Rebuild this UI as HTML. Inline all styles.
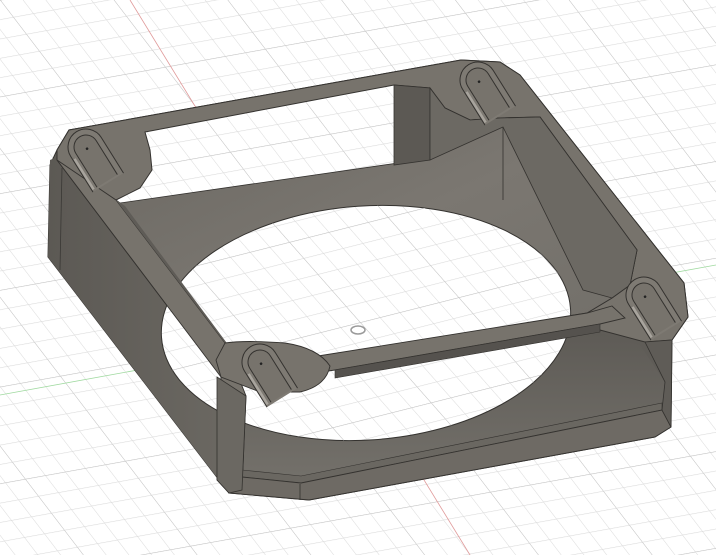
<!DOCTYPE html>
<html><head><style>html,body{margin:0;padding:0;background:#fff;width:716px;height:555px;overflow:hidden}</style></head>
<body>
<svg width="716" height="555" viewBox="0 0 716 555" xmlns="http://www.w3.org/2000/svg">
<defs>
<pattern id="g" width="10" height="10" patternUnits="userSpaceOnUse" patternTransform="matrix(2 -0.36 1.3 1.7 0 0)">
<rect width="10" height="10" fill="#fff"/>
<path d="M0 0H10M0 0V10" stroke="#dadada" stroke-width="0.55" fill="none"/>
</pattern>
<pattern id="G" width="50" height="50" patternUnits="userSpaceOnUse" patternTransform="matrix(2 -0.36 1.3 1.7 0 0)">
<path d="M0 0H50M0 0V50" stroke="#c2c2c2" stroke-width="0.45" fill="none"/>
</pattern>
<linearGradient id="fl" x1="0" y1="0" x2="1" y2="1"><stop offset="0" stop-color="#6a6761"/><stop offset="0.5" stop-color="#7b7771"/><stop offset="1" stop-color="#716e68"/></linearGradient>
<linearGradient id="lw" x1="0" y1="0" x2="1" y2="0"><stop offset="0" stop-color="#5c5954"/><stop offset="1" stop-color="#6b6862"/></linearGradient>
<linearGradient id="low" x1="0" y1="0" x2="0" y2="1"><stop offset="0" stop-color="#5e5b56"/><stop offset="1" stop-color="#74716b"/></linearGradient>
<g id="boss">
<path d="M-18,42 V0 A18,18 0 0 1 18,0 V42" fill="#7e7a73" stroke="#34322f" stroke-width="1"/>
<path d="M-12,40 V0 A12,12 0 0 1 12,0 V40" fill="#77736c" stroke="#34322f" stroke-width="1"/>
<path d="M-16,40 V4" stroke="#a8a49d" stroke-width="2.5" fill="none"/>
<circle cx="0" cy="2" r="1.3" fill="#222"/>
</g>
</defs>
<rect width="716" height="555" fill="url(#g)"/>
<rect width="716" height="555" fill="url(#G)"/>
<line x1="130" y1="0" x2="470" y2="555" stroke="#e09a9a" stroke-width="0.8"/>
<line x1="0" y1="395" x2="716" y2="265" stroke="#9fd99f" stroke-width="0.8"/>

<!-- silhouette -->
<polygon points="57,150 69,130 461,60 500,62 520,75 684,283 688,317 672,340 671,427 655,437 309,500 229,493 48,257 50,165" fill="#5f5c57" stroke="#34322f" stroke-width="1"/>
<polygon points="50,160 57,157 221,377 217,480 229,493 48,257" fill="url(#lw)"/>
<line x1="62" y1="168" x2="60" y2="270" stroke="#3a3835" stroke-width="0.8"/>
<!-- top face -->
<polygon points="57,150 69,130 461,60 500,62 520,75 684,283 688,317 672,340 645,342 600,330 335,377 310,392 260,392 221,377 57,160" fill="#77736c" stroke="#34322f" stroke-width="1"/>
<!-- opening (see-through) -->
<polygon points="116,200 140,188 152,170 150,150 145,132 394,85 430,88 445,108 470,120 500,118 540,117 637,250 630,285 612,298 587,313 326,353 318,358 300,348 260,342 225,343" fill="url(#g)"/>
<polygon points="116,200 140,188 152,170 150,150 145,132 394,85 430,88 445,108 470,120 500,118 540,117 637,250 630,285 612,298 587,313 326,353 318,358 300,348 260,342 225,343" fill="url(#G)" stroke="#34322f" stroke-width="1"/>
<!-- floor -->
<polygon points="116,200 120,203 398,163 430,150 445,108 470,120 500,118 540,117 637,250 630,285 612,298 587,313 326,353 318,358 300,348 260,342 225,343" fill="url(#fl)" stroke="#34322f" stroke-width="0.8"/>
<!-- back wall vertical -->
<polygon points="394,85 430,88 430,160 394,165" fill="#5c5954" stroke="#34322f" stroke-width="0.8"/>
<!-- right inner wall -->
<polygon points="430,88 445,108 470,120 500,118 540,117 637,250 630,285 612,298 583,290 503,127 430,160" fill="#6c6963" stroke="#34322f" stroke-width="0.8"/>
<line x1="503" y1="127" x2="503" y2="200" stroke="#34322f" stroke-width="0.8"/>
<!-- lower interior (under beam) -->
<polygon points="238,392 246,398 600,333 640,345 665,382 662,410 301,483 242,477" fill="url(#low)"/>
<!-- hole -->
<ellipse cx="366" cy="323" rx="205" ry="117" transform="rotate(-4 366 323)" fill="url(#g)" stroke="#34322f" stroke-width="1"/>
<ellipse cx="366" cy="323" rx="205" ry="117" transform="rotate(-4 366 323)" fill="url(#G)"/>
<!-- left strip redraw (covers hole overflow) -->
<polygon points="57,160 116,200 225,343 246,396 242,490 229,493 217,480 221,377" fill="#77736c" stroke="#34322f" stroke-width="0.9"/>
<polygon points="116,200 125,206 232,350 225,343" fill="#5f5c57"/>
<!-- lip at bottom of lower interior -->
<polygon points="242,470 301,476 662,403 662,410 301,483 242,477" fill="#6a6761" stroke="#34322f" stroke-width="0.6"/>
<!-- beam -->
<polygon points="318,356 587,313 612,306 625,318 600,324 335,370 322,372" fill="#77736c" stroke="#34322f" stroke-width="0.9"/>
<polygon points="335,370 600,324 600,332 335,378" fill="#55524e" stroke="#34322f" stroke-width="0.6"/>
<!-- front lip bottom -->
<polygon points="242,477 301,483 662,410 671,427 655,437 309,500 229,493" fill="#6e6a64" stroke="#34322f" stroke-width="0.9"/>
<line x1="300" y1="484" x2="300" y2="500" stroke="#34322f" stroke-width="0.8"/>
<!-- left post front face -->
<polygon points="217,377 246,396 242,490 229,493 217,480" fill="#6b6862" stroke="#34322f" stroke-width="0.8"/>
<!-- right post -->
<polygon points="645,342 672,340 671,427 662,410 665,382" fill="#5f5c57" stroke="#34322f" stroke-width="0.8"/>
<!-- front-left corner top face -->
<path d="M221,377 L216,360 L225,343 Q245,340 285,343 Q318,348 330,366 Q326,386 300,392 L260,392 Z" fill="#77736c" stroke="#34322f" stroke-width="0.9"/>
<!-- bosses -->
<use href="#boss" transform="translate(86,147) rotate(-32)"/>
<use href="#boss" transform="translate(478,80) rotate(-32)"/>
<use href="#boss" transform="translate(260,362) rotate(-32)"/>
<use href="#boss" transform="translate(644,295) rotate(-32)"/>
<ellipse cx="358" cy="330" rx="7" ry="4" fill="none" stroke="#9a9a9a" stroke-width="1.5"/>
</svg>
</body></html>
